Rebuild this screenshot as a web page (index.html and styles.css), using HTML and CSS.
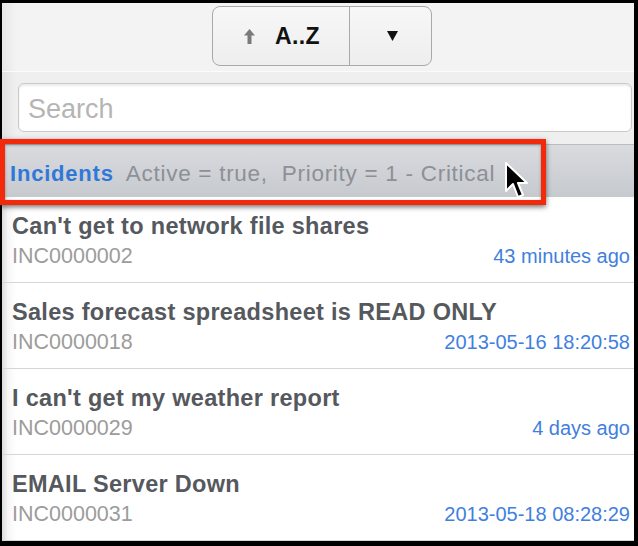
FILE: index.html
```html
<!DOCTYPE html>
<html>
<head>
<meta charset="utf-8">
<link rel="stylesheet" href="styles.css">
</head>
<body>
<div class="screen">
  <div class="app">
    <header class="topbar">
      <div class="sort-group">
        <button class="sort-btn sort-main">
          <svg class="up-arrow" width="11" height="15" viewBox="0 0 11 15"><polygon points="5.5,0 11,6.5 7.5,6.5 7.5,15 3.5,15 3.5,6.5 0,6.5" fill="#7a7a7a"/></svg>
          <span>A..Z</span>
        </button>
        <button class="sort-btn sort-drop">
          <svg width="11" height="10" viewBox="0 0 11 10"><polygon points="0,0 11,0 5.5,10" fill="#111"/></svg>
        </button>
      </div>
    </header>
    <div class="search-area">
      <div class="search-box">Search</div>
    </div>
    <div class="filter-bar">
      <span class="filter-title">Incidents</span>
      <span class="filter-cond">Active = true,&nbsp; Priority = 1 - Critical</span>
    </div>
    <ul class="list">
      <li class="row">
        <div class="row-title">Can't get to network file shares</div>
        <div class="row-meta"><span class="row-id">INC0000002</span><span class="row-date">43 minutes ago</span></div>
      </li>
      <li class="row">
        <div class="row-title">Sales forecast spreadsheet is READ ONLY</div>
        <div class="row-meta"><span class="row-id">INC0000018</span><span class="row-date">2013-05-16 18:20:58</span></div>
      </li>
      <li class="row">
        <div class="row-title">I can't get my weather report</div>
        <div class="row-meta"><span class="row-id">INC0000029</span><span class="row-date">4 days ago</span></div>
      </li>
      <li class="row">
        <div class="row-title">EMAIL Server Down</div>
        <div class="row-meta"><span class="row-id">INC0000031</span><span class="row-date">2013-05-18 08:28:29</span></div>
      </li>
    </ul>
  </div>
  <div class="highlight-box"></div>
  <svg class="cursor" width="28" height="40" viewBox="0 0 28 40"><polygon points="2,2 2,30 9,23 14,36 19,34 14,22 23,22" fill="#000" stroke="#fff" stroke-width="2" stroke-linejoin="round"/></svg>
</div>
</body>
</html>
```

FILE: styles.css
```css
* { box-sizing: border-box; }
html, body { margin: 0; padding: 0; }
body { background: #000; font-family: "Liberation Sans", Arial, sans-serif; }

.screen {
  position: relative;
  width: 638px;
  height: 546px;
  background: #000;
  padding: 3px 4px 5px 2px;
  overflow: hidden;
}

.app {
  width: 632px;
  height: 538px;
  background: #fff;
  overflow: hidden;
  display: flex;
  flex-direction: column;
}

.topbar {
  height: 69px;
  flex: none;
  background: linear-gradient(to right, #e6e6e6 0, #f3f3f3 14px, #f3f3f3 100%);
  border-bottom: 1px solid #fbfbfb;
  display: flex;
  justify-content: center;
  align-items: flex-start;
  padding-top: 3px;
  padding-left: 8px;
}

.sort-group {
  display: flex;
  height: 60px;
  border: 1.5px solid #a9a9a9;
  border-radius: 8px;
  overflow: hidden;
  background: linear-gradient(#f7f7f7, #eeeeee);
}

.sort-btn {
  border: 0;
  margin: 0;
  background: transparent;
  display: flex;
  align-items: center;
  justify-content: center;
  font-family: inherit;
  padding: 0;
}

.sort-main {
  width: 137px;
  border-right: 1.5px solid #a9a9a9;
  gap: 20px;
  padding-left: 2px;
}

.sort-main span {
  font-weight: bold;
  font-size: 23px;
  color: #111;
  letter-spacing: 0.4px;
}

.up-arrow { margin-top: 1px; }

.sort-drop { width: 81px; padding-left: 4px; }

.search-area {
  height: 72px;
  flex: none;
  background: linear-gradient(to right, #e2e2e2 0, #efefef 14px, #efefef 100%);
  padding: 11px 2px 0 16px;
}

.search-box {
  height: 49px;
  background: #fff;
  border: 1.5px solid #c9c9c9;
  border-radius: 6px;
  box-shadow: inset 0 2px 2px rgba(0,0,0,0.08);
  font-size: 27px;
  color: #b5b5b5;
  padding-left: 9px;
  padding-top: 4px;
  display: flex;
  align-items: center;
}

.filter-bar {
  height: 53px;
  flex: none;
  background: linear-gradient(#d9dbdf, #c6c9ce);
  border-top: 1px solid #b9bcc1;
  display: flex;
  align-items: center;
  padding-left: 8px;
  padding-top: 5px;
  gap: 12px;
  white-space: nowrap;
}

.filter-title {
  font-weight: bold;
  font-size: 22px;
  color: #2f78d8;
  letter-spacing: 0.8px;
}

.filter-cond {
  font-size: 22.5px;
  color: #8d9095;
  letter-spacing: 0.72px;
}

.list {
  list-style: none;
  margin: 0;
  padding: 0;
  flex: 1;
  background: linear-gradient(to right, #dcdcdc 0, #f6f6f6 6px, #fff 14px, #fff 100%);
}

.row {
  height: 86px;
  padding: 16px 4px 0 10px;
  border-bottom: 1.5px solid #d6d6d6;
}

.row-title {
  font-size: 23.5px;
  line-height: 26px;
  font-weight: bold;
  color: #55585d;
  letter-spacing: 0.3px;
  white-space: nowrap;
}

.row-meta {
  display: flex;
  justify-content: space-between;
  align-items: baseline;
  margin-top: 4px;
  line-height: 26px;
}

.row-id {
  font-size: 21.5px;
  color: #9c9c9c;
}

.row-date {
  font-size: 20px;
  color: #3f80df;
}

.highlight-box {
  position: absolute;
  left: 0;
  top: 139px;
  width: 546px;
  height: 66px;
  border: 5px solid #f3290c;
  box-shadow: 0 2px 5px rgba(0,0,0,0.55), inset 0 1px 3px rgba(0,0,0,0.35);
}

.cursor {
  position: absolute;
  left: 504px;
  top: 161px;
}
```
